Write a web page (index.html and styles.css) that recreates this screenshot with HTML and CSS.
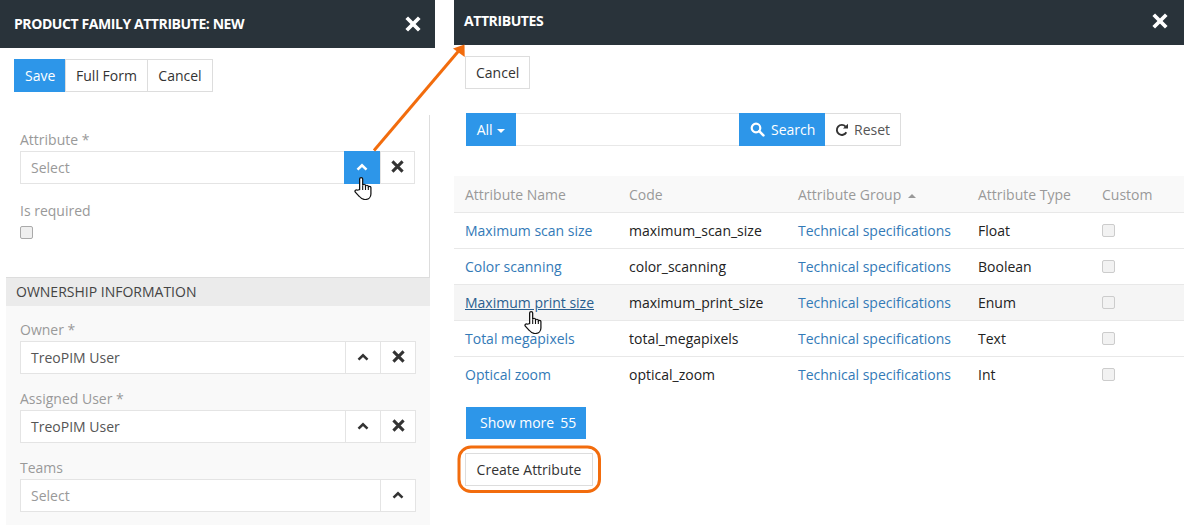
FILE: index.html
```html
<!DOCTYPE html>
<html lang="en">
<head>
<meta charset="utf-8">
<title>Product Family Attribute</title>
<link rel="stylesheet" href="styles.css">
</head>
<body>
<svg class="defs" width="0" height="0" aria-hidden="true">
  <symbol id="i-x" viewBox="0 0 12 12"><path d="M1.3 1.3 10.7 10.700M10.700 1.3 1.3 10.700" fill="none" stroke="currentColor" stroke-width="2.8" stroke-linecap="butt"/></symbol>
  <symbol id="i-up" viewBox="0 0 12 8"><path d="M1.5 6.6 6 2.4 10.500 6.600" fill="none" stroke="currentColor" stroke-width="2.6"/></symbol>
  <symbol id="i-hand" viewBox="0 0 16.600 23" preserveAspectRatio="none"><path d="M5.2 12.5V2a1.4 1.4 0 0 1 2.8 0V8.500a1.3 1.3 0 0 1 2.600 0V9.500a1.300 1.300 0 0 1 2.600 0V10.500a1.200 1.200 0 0 1 2.400 0V17c0 3-2 5.500-5 5.500H10c-2.500 0-3.500-1-5-3L1.200 15.200c-1-1.500.8-3 2-2Z" fill="#fff" stroke="#111" stroke-width="1.150"/><path d="M8 8.500V13M10.600 9V13M13.200 10V13" fill="none" stroke="#111" stroke-width="1"/></symbol>
</svg>

<div class="page">
  <section class="left">
    <header class="bar bar-left">
      <h1 class="bar-title">Product Family Attribute: New</h1>
      <svg class="bar-close"><use href="#i-x"/></svg>
    </header>
    <div class="toolbar toolbar-left">
      <button class="btn btn-primary">Save</button><button class="btn btn-joined">Full Form</button><button class="btn btn-joined">Cancel</button>
    </div>
    <div class="form-main">
      <div class="label">Attribute *</div>
      <div class="field field-main">
        <span class="field-value placeholder">Select</span>
        <span class="field-btn field-btn-active"><svg class="ico-up"><use href="#i-up"/></svg></span>
        <span class="field-btn"><svg class="ico-x"><use href="#i-x"/></svg></span>
      </div>
      <div class="label label-required">Is required</div>
      <span class="check"></span>
    </div>
    <div class="section-head">Ownership Information</div>
    <div class="section-body">
      <div class="label">Owner *</div>
      <div class="field">
        <span class="field-value">TreoPIM User</span>
        <span class="field-btn"><svg class="ico-up"><use href="#i-up"/></svg></span>
        <span class="field-btn"><svg class="ico-x"><use href="#i-x"/></svg></span>
      </div>
      <div class="label label-next">Assigned User *</div>
      <div class="field">
        <span class="field-value">TreoPIM User</span>
        <span class="field-btn"><svg class="ico-up"><use href="#i-up"/></svg></span>
        <span class="field-btn"><svg class="ico-x"><use href="#i-x"/></svg></span>
      </div>
      <div class="label label-next">Teams</div>
      <div class="field">
        <span class="field-value placeholder">Select</span>
        <span class="field-btn"><svg class="ico-up"><use href="#i-up"/></svg></span>
      </div>
    </div>
  </section>

  <section class="right">
    <header class="bar bar-right">
      <h2 class="bar-title">Attributes</h2>
      <svg class="bar-close"><use href="#i-x"/></svg>
    </header>
    <div class="toolbar toolbar-right">
      <button class="btn">Cancel</button>
    </div>
    <div class="search-row">
      <button class="btn btn-primary btn-all">All <span class="caret"></span></button>
      <div class="search-input"></div>
      <button class="btn btn-primary btn-search">
        <svg class="ico-search" viewBox="0 0 15 15"><circle cx="6" cy="6" r="4.300" fill="none" stroke="currentColor" stroke-width="2.200"/><path d="M9.200 9.200 13.400 13.400" stroke="currentColor" stroke-width="2.600" stroke-linecap="round"/></svg>
        Search
      </button>
      <button class="btn btn-reset">
        <svg class="ico-reset" viewBox="0 0 14 14"><path d="M11.300 9.200A5 5 0 1 1 10.600 3.600" fill="none" stroke="#333" stroke-width="1.900"/><path d="M8 5.600H13V.8Z" fill="#333"/></svg>
        Reset
      </button>
    </div>
    <table class="grid">
      <colgroup><col class="c1"><col class="c2"><col class="c3"><col class="c4"><col></colgroup>
      <thead>
        <tr><th>Attribute Name</th><th>Code</th><th>Attribute Group <span class="sort"></span></th><th>Attribute Type</th><th>Custom</th></tr>
      </thead>
      <tbody>
        <tr><td><a class="link">Maximum scan size</a></td><td>maximum_scan_size</td><td><a class="link">Technical specifications</a></td><td>Float</td><td><span class="check check-cell"></span></td></tr>
        <tr><td><a class="link">Color scanning</a></td><td>color_scanning</td><td><a class="link">Technical specifications</a></td><td>Boolean</td><td><span class="check check-cell"></span></td></tr>
        <tr class="row-hover"><td><a class="link link-hover">Maximum print size</a></td><td>maximum_print_size</td><td><a class="link">Technical specifications</a></td><td>Enum</td><td><span class="check check-cell"></span></td></tr>
        <tr><td><a class="link">Total megapixels</a></td><td>total_megapixels</td><td><a class="link">Technical specifications</a></td><td>Text</td><td><span class="check check-cell"></span></td></tr>
        <tr class="row-last"><td><a class="link">Optical zoom</a></td><td>optical_zoom</td><td><a class="link">Technical specifications</a></td><td>Int</td><td><span class="check check-cell"></span></td></tr>
      </tbody>
    </table>
    <button class="btn btn-primary btn-more">Show more<span class="more-count">55</span></button>
    <button class="btn btn-create">Create Attribute</button>
  </section>
</div>

<svg class="annot" viewBox="0 0 1184 525" aria-hidden="true">
  <path d="M374 150.500 462 47" fill="none" stroke="#f26c0d" stroke-width="3"/>
  <path d="M464.500 44.500 464.700 57 453 48.500Z" fill="#f26c0d"/>
  <rect x="459" y="447" width="140.500" height="44.500" rx="12" fill="none" stroke="#f26c0d" stroke-width="3"/>
</svg>
<svg class="cursor cursor-a"><use href="#i-hand"/></svg>
<svg class="cursor cursor-b"><use href="#i-hand"/></svg>
</body>
</html>
```
FILE: styles.css
```css
* { box-sizing: border-box; }
html, body { margin: 0; padding: 0; }
body {
  position: relative;
  width: 1184px;
  height: 525px;
  overflow: hidden;
  background: #fff;
  font-family: "Open Sans", "Liberation Sans", sans-serif;
  font-size: 14px;
  line-height: 20px;
  color: #333;
}
.defs { position: absolute; }
.page { display: flex; gap: 19px; height: 525px; }
.left { width: 435px; flex: none; }
.right { flex: 1; min-width: 0; }

.bar {
  display: flex;
  align-items: center;
  justify-content: space-between;
  background: #29333a;
  color: #fff;
}
.bar-left { height: 48px; padding: 0 14px 0 14px; }
.bar-right { height: 45px; padding: 0 16px 3px 10px; }
.bar-title {
  margin: 0;
  font-size: 14px;
  font-weight: 700;
  letter-spacing: -0.42px;
  text-transform: uppercase;
}
.bar-close { width: 16px; height: 16px; color: #fff; }

.btn {
  height: 33px;
  padding: 0 10px;
  border: 1px solid #ddd;
  background: #fff;
  color: #333;
  font: inherit;
  border-radius: 0;
}
.btn-primary { background: #2d96e9; border-color: #2d96e9; color: #fff; }
.btn-joined { margin-left: -1px; }

.toolbar-left { display: flex; margin: 11px 0 0 14px; }
.toolbar-left .btn-primary { width: 51px; }
.toolbar-left .btn-joined:nth-child(2) { width: 83px; margin-left: 0; }
.toolbar-left .btn-joined:nth-child(3) { width: 66px; }
.toolbar-right { display: flex; margin: 11px 0 0 11px; }
.toolbar-right .btn { width: 65px; }

.form-main {
  width: 430px;
  height: 162px;
  margin-top: 23px;
  padding: 15px 14px 0 20px;
  border-right: 1px solid #ddd;
}
.label { height: 20px; margin-bottom: 1px; color: #999; }
.label-required { margin-top: 17px; }
.label-next { margin-top: 15px; }

.field {
  display: flex;
  height: 33px;
  width: 396px;
  background: #fff;
  border: 1px solid #e4e4e4;
}
.field-main { width: 395px; }
.field-main .field-btn:last-child { width: 34px; }
.field-value { flex: 1; padding: 0 10px; line-height: 31px; color: #555; }
.placeholder { color: #999; }
.field-btn {
  width: 35px;
  flex: none;
  display: flex;
  align-items: center;
  justify-content: center;
  padding-bottom: 2px;
  border-left: 1px solid #e4e4e4;
  color: #333;
}
.field-btn-active {
  width: 36px;
  margin: -1px 0;
  background: #2d96e9;
  border-left: 0;
  color: #fff;
}
.ico-up { width: 12px; height: 8px; }
.ico-x { width: 13px; height: 13px; }

.check {
  display: block;
  width: 13px;
  height: 13px;
  background: #efefef;
  border: 1px solid #aaa;
  border-radius: 2px;
}
.label-required + .check { margin-top: 5px; }
.check-cell { margin-bottom: 2px; background: #f2f2f2; border-color: #ccc; }

.section-head {
  width: 424px;
  height: 29px;
  margin-left: 6px;
  padding: 0 10px;
  background: #ebebeb;
  border-top: 1px solid #ddd;
  line-height: 28px;
  color: #444;
  text-transform: uppercase;
}
.section-body {
  width: 424px;
  height: 219px;
  margin-left: 6px;
  padding: 14px 0 0 14px;
  background: #f9f9f9;
}

.search-row { display: flex; margin: 24px 0 0 12px; }
.btn-all { width: 50px; padding: 0; }
.caret {
  display: inline-block;
  width: 0;
  height: 0;
  margin-left: 1px;
  vertical-align: 2px;
  border-top: 4px solid #fff;
  border-left: 4px solid transparent;
  border-right: 4px solid transparent;
}
.search-input {
  width: 223px;
  height: 33px;
  border-top: 1px solid #e8e8e8;
  border-bottom: 1px solid #e8e8e8;
}
.btn-search {
  display: flex;
  align-items: center;
  gap: 6px;
  width: 86px;
  padding: 0 0 0 10px;
}
.ico-search { width: 15px; height: 15px; }
.btn-reset {
  display: flex;
  align-items: center;
  gap: 5px;
  width: 76px;
  padding: 0 0 0 10px;
  border-left: 0;
  color: #555;
}
.ico-reset { width: 14px; height: 14px; }

.grid {
  width: 730px;
  margin-top: 30px;
  border-collapse: collapse;
  table-layout: fixed;
}
.c1 { width: 164px; }
.c2 { width: 169px; }
.c3 { width: 180px; }
.c4 { width: 124px; }
.grid th, .grid td {
  height: 36px;
  padding: 2px 11px 0;
  text-align: left;
  font-weight: 400;
  border-bottom: 1px solid #e8e8e8;
}
.grid th { background: #f9f9f9; color: #999; }
.grid td { color: #222; }
.row-hover td { background: #f5f5f5; }
.row-last td { border-bottom: 0; }
.link { color: #337ab7; }
.link-hover { color: #2a5f8f; text-decoration: underline; }
.sort {
  display: inline-block;
  width: 0;
  height: 0;
  margin-left: 3px;
  vertical-align: 2px;
  border-bottom: 4px solid #999;
  border-left: 4px solid transparent;
  border-right: 4px solid transparent;
}

.btn-more {
  display: block;
  width: 120px;
  height: 32px;
  margin: 15px 0 0 12px;
  padding: 0 0 0 13px;
  text-align: left;
}
.more-count { margin-left: 6px; }
.btn-create {
  display: block;
  width: 128px;
  margin: 14px 0 0 11px;
  padding: 0;
}

.annot {
  position: absolute;
  left: 0;
  top: 0;
  width: 1184px;
  height: 525px;
  pointer-events: none;
}
.cursor { position: absolute; width: 18px; height: 23px; }
.cursor-a { left: 354px; top: 177px; }
.cursor-b { left: 524px; top: 311px; }
```
